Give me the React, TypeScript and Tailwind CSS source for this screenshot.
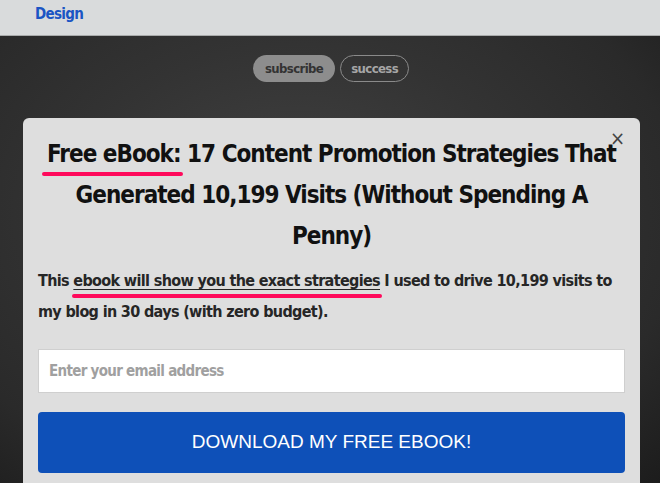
import React from 'react';

const cond = { fontFamily: '"DejaVu Sans Condensed", "DejaVu Sans", sans-serif' };

const Marker = ({ children, className = '' }: { children: React.ReactNode; className?: string }) => (
  <span className="relative inline-block">
    {children}
    <span className={`absolute h-[4px] rounded-full bg-[#ff0a5c] ${className}`} />
  </span>
);

export default function App() {
  return (
    <div className="w-[660px] h-[483px] overflow-hidden flex flex-col" style={cond}>
      {/* top nav */}
      <div className="h-[36px] shrink-0 bg-[#d9dbdc] border-b border-[#a9abab] flex items-center px-[35px]">
        <span className="text-[15px] font-bold text-[#1b55c4] tracking-[-0.7px] -mt-[7px]">Design</span>
      </div>

      {/* dark area */}
      <div className="flex-1 bg-[radial-gradient(ellipse_at_45%_40%,#434343_0%,#333333_45%,#2a2a2a_75%,#1c1c1c_100%)] flex flex-col items-center pt-[19px]">
        <div className="flex gap-[5px] ml-[2px]">
          <span className="h-[27px] px-[12px] rounded-full bg-[#8d8d8d] text-[#333] text-[13px] font-bold flex items-center tracking-[-0.6px]">
            subscribe
          </span>
          <span className="h-[27px] px-[10px] rounded-full border-[1.5px] border-[#8a8a8a] text-[#a6a6a6] text-[13px] font-bold flex items-center tracking-[-0.6px]">
            success
          </span>
        </div>

        {/* modal */}
        <div className="relative mt-[36px] w-[617px] self-start ml-[23px] flex-1 bg-[#dedede] rounded-t-[6px] px-[15px] pt-[16px]">
          <button className="absolute right-[15px] top-[10px] text-[#444] text-[20px] leading-none font-normal">×</button>

          <h1 className="text-center text-[24px] leading-[41px] font-bold text-[#111] tracking-[-1px]">
            <Marker className="-left-[5px] -right-[2px] bottom-[-1px]">Free eBook:</Marker> 17 Content Promotion Strategies That
            Generated 10,199 Visits (Without Spending A Penny)
          </h1>

          <p className="mt-[8px] text-[16px] leading-[31px] font-bold text-[#262626] tracking-[-0.65px]">
            This{' '}
            <Marker className="-left-[1px] -right-[2px] bottom-[-2px]">
              <span className="underline decoration-[1px] underline-offset-[3px]">ebook will show you the exact strategies</span>
            </Marker>{' '}
            I used to drive 10,199 visits to my blog in 30 days (with zero budget).
          </p>

          <div className="mt-[22px] h-[44px] bg-white border border-[#cfcfcf] flex items-center px-[10px]">
            <span className="text-[15px] font-bold text-[#a0a0a0] tracking-[-0.7px]">Enter your email address</span>
          </div>

          <button
            className="mt-[19px] w-full h-[61px] bg-[#0e50b8] rounded-[4px] text-white text-[19px] flex items-center justify-center"
            style={{ fontFamily: '"Liberation Sans", Arial, sans-serif' }}
          >
            DOWNLOAD MY FREE EBOOK!
          </button>
        </div>
      </div>
    </div>
  );
}
